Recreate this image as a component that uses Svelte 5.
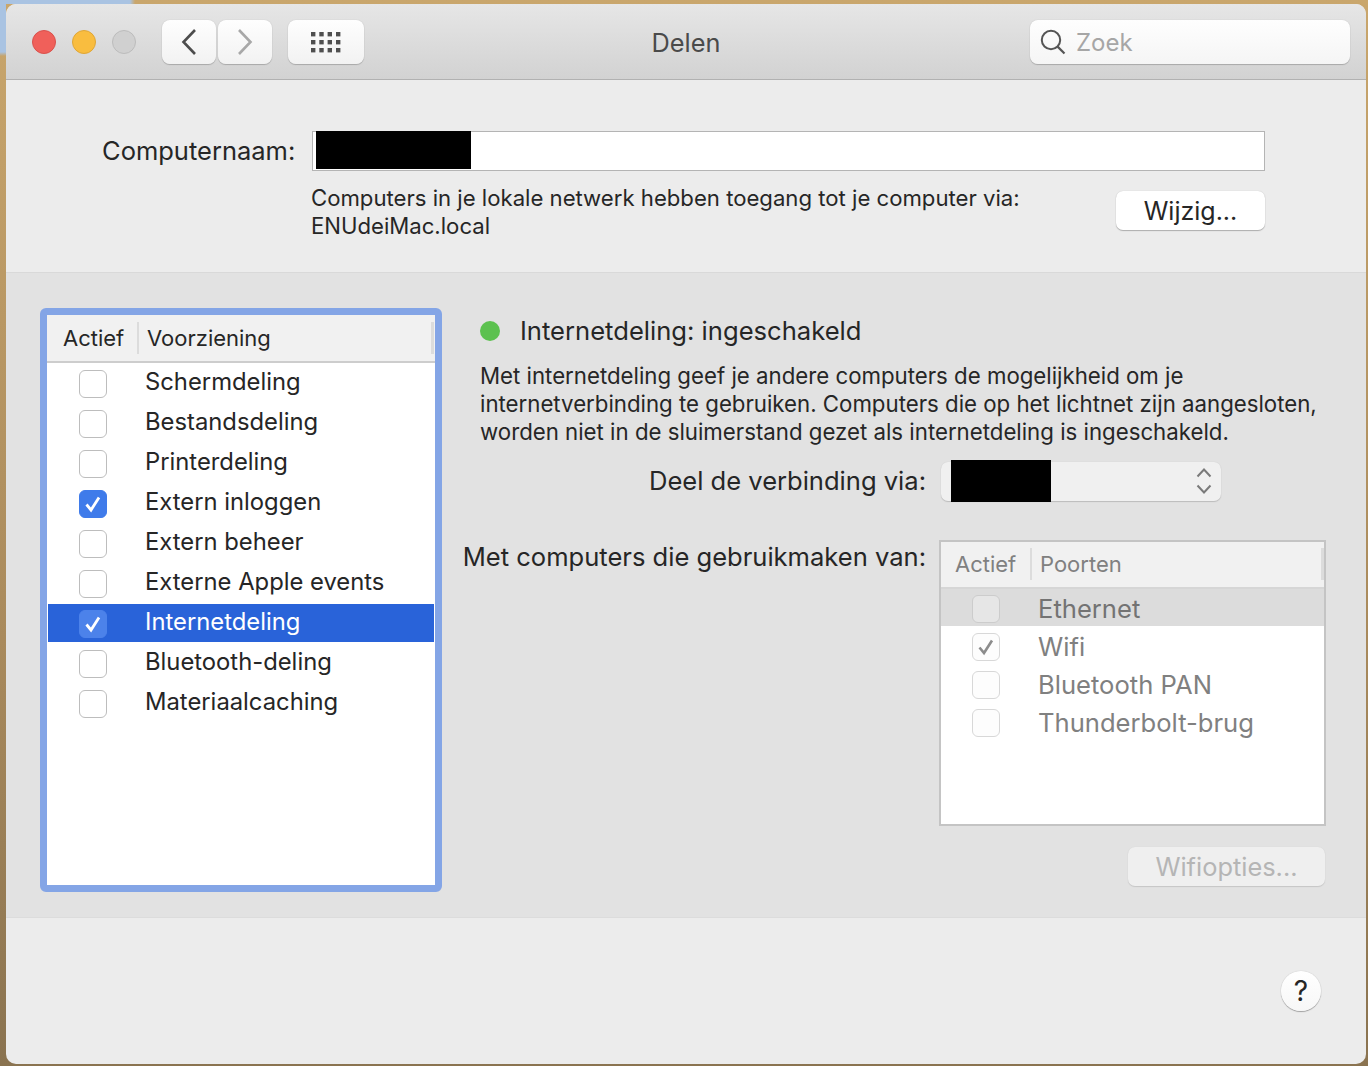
<script>
  const services = [
    { name: 'Schermdeling', on: false },
    { name: 'Bestandsdeling', on: false },
    { name: 'Printerdeling', on: false },
    { name: 'Extern inloggen', on: true },
    { name: 'Extern beheer', on: false },
    { name: 'Externe Apple events', on: false },
    { name: 'Internetdeling', on: true, sel: true },
    { name: 'Bluetooth-deling', on: false },
    { name: 'Materiaalcaching', on: false }
  ];
  const ports = [
    { name: 'Ethernet', on: false, sel: true },
    { name: 'Wifi', on: true },
    { name: 'Bluetooth PAN', on: false },
    { name: 'Thunderbolt-brug', on: false }
  ];
</script>

<div class="wall">
  <div class="window">
    <header class="titlebar">
      <div class="lights">
        <span class="light red"></span>
        <span class="light yellow"></span>
        <span class="light grey"></span>
      </div>
      <div class="nav">
        <button class="tb back" aria-label="Terug">
          <svg width="16" height="28" viewBox="0 0 16 28"><path d="M14 2 L2.5 14 L14 26" fill="none" stroke="#4d4d4d" stroke-width="2.6"/></svg>
        </button>
        <button class="tb fwd" aria-label="Vooruit">
          <svg width="16" height="28" viewBox="0 0 16 28"><path d="M2 2 L13.5 14 L2 26" fill="none" stroke="#a8a8a8" stroke-width="2.6"/></svg>
        </button>
      </div>
      <button class="tb grid-btn" aria-label="Toon alles">
        <svg width="30" height="22" viewBox="0 0 30 22" fill="#4f4f4f">
          {#each [0, 8, 16] as y}
            {#each [0, 8.3, 16.6, 25] as x}
              <rect x={x} y={y + 1} width="4.4" height="4.4" />
            {/each}
          {/each}
        </svg>
      </button>
      <div class="title">Delen</div>
      <div class="search">
        <svg width="28" height="28" viewBox="0 0 28 28"><circle cx="12" cy="12" r="9.2" fill="none" stroke="#555" stroke-width="2"/><path d="M18.6 18.6 L25.5 25.5" stroke="#555" stroke-width="2.2"/></svg>
        <span>Zoek</span>
      </div>
    </header>

    <section class="top">
      <div class="name-row">
        <span class="name-label">Computernaam:</span>
        <div class="name-field"><span class="redact r1"></span></div>
      </div>
      <div class="info-row">
        <p>Computers in je lokale netwerk hebben toegang tot je computer via:<br />ENUdeiMac.local</p>
        <button class="btn wijzig">Wijzig...</button>
      </div>
    </section>

    <section class="group">
      <div class="svc-list">
        <div class="thead">
          <span class="th-a">Actief</span>
          <span class="th-b">Voorziening</span>
        </div>
        <div class="rows">
          {#each services as s}
            <div class="row" class:sel={s.sel}>
              <span class="check" class:on={s.on}>
                {#if s.on}
                  <svg width="18" height="18" viewBox="0 0 18 18"><path d="M2.5 9.5 L7 15 L15 2.5" fill="none" stroke="#fff" stroke-width="2.8"/></svg>
                {/if}
              </span>
              <span class="row-name">{s.name}</span>
            </div>
          {/each}
        </div>
      </div>

      <div class="detail">
        <div class="status"><span class="dot"></span><span>Internetdeling: ingeschakeld</span></div>
        <p class="desc">Met internetdeling geef je andere computers de mogelijkheid om je<br />internetverbinding te gebruiken. Computers die op het lichtnet zijn aangesloten,<br />worden niet in de sluimerstand gezet als internetdeling is ingeschakeld.</p>
        <div class="via">
          <span class="lbl">Deel de verbinding via:</span>
          <div class="select">
            <span class="redact r2"></span>
            <svg width="18" height="30" viewBox="0 0 18 30"><path d="M2.5 10.5 L9 3.5 L15.5 10.5 M2.5 19.5 L9 26.5 L15.5 19.5" fill="none" stroke="#7a7a7a" stroke-width="2"/></svg>
          </div>
        </div>
        <div class="with">
          <span class="lbl">Met computers die gebruikmaken van:</span>
          <div class="ports">
            <div class="pthead">
              <span class="pth-a">Actief</span>
              <span class="pth-b">Poorten</span>
            </div>
            {#each ports as p}
              <div class="prow" class:psel={p.sel}>
                <span class="pcheck">
                  {#if p.on}
                    <svg width="18" height="18" viewBox="0 0 18 18"><path d="M2.5 9.5 L7 15 L15 2.5" fill="none" stroke="#8c8c8c" stroke-width="2.6"/></svg>
                  {/if}
                </span>
                <span class="prow-name">{p.name}</span>
              </div>
            {/each}
          </div>
        </div>
        <button class="btn wifi" disabled>Wifiopties...</button>
      </div>
    </section>

    <footer class="foot">
      <button class="help">?</button>
    </footer>
  </div>
</div>

<style>
  :global(body) {
    margin: 0;
  }
  .wall {
    width: 1368px;
    height: 1066px;
    box-sizing: border-box;
    padding: 4px 2px 2px 6px;
    background:
      linear-gradient(to right, #a9c3e2 0, #a9c3e2 130px, transparent 135px) top left / 100% 4px no-repeat,
      linear-gradient(to bottom, #a9c3e2 0, #a9c3e2 52px, transparent 56px) top left / 6px 100% no-repeat,
      linear-gradient(to bottom, #c9a66c, #a98a5c 60%, #8a7350);
    font-family: Inter, "Noto Sans", sans-serif;
    color: #262626;
    overflow: hidden;
  }
  .window {
    width: 1360px;
    height: 1060px;
    border-radius: 10px;
    overflow: hidden;
    background: #ececec;
    display: flex;
    flex-direction: column;
  }
  .titlebar {
    height: 76px;
    flex: none;
    box-sizing: border-box;
    border-bottom: 1px solid #b1b1b1;
    background: linear-gradient(#e6e6e6, #d2d2d2);
    display: flex;
    align-items: center;
    position: relative;
    padding-left: 26px;
    padding-top: 1px;
  }
  .lights {
    display: flex;
    gap: 16px;
    margin-right: 26px;
  }
  .light {
    width: 24px;
    height: 24px;
    border-radius: 50%;
    box-sizing: border-box;
    border: 1px solid;
  }
  .red { background: #f0605a; border-color: #d9514c; }
  .yellow { background: #f9bd3f; border-color: #dfa637; }
  .grey { background: #d0d0d0; border-color: #bcbcbc; }
  .nav {
    display: flex;
    gap: 2px;
    margin-right: 16px;
  }
  button {
    font-family: inherit;
    padding: 0;
    margin: 0;
    cursor: default;
  }
  .tb {
    height: 44px;
    border: none;
    border-radius: 8px;
    background: linear-gradient(#fefefe, #f2f2f2);
    box-shadow: 0 1px 1px #a8a8a8, 0 0 1px #b5b5b5;
    display: flex;
    align-items: center;
    justify-content: center;
  }
  .back, .fwd { width: 54px; }
  .grid-btn { width: 76px; }
  .title {
    position: absolute;
    left: 0;
    right: 0;
    top: 23px;
    text-align: center;
    font-size: 25.3px;
    line-height: 32px;
    color: #4a4a4a;
    pointer-events: none;
  }
  .search {
    margin-left: auto;
    margin-right: 16px;
    width: 320px;
    height: 44px;
    border-radius: 8px;
    background: linear-gradient(#fefefe, #f5f5f5);
    box-shadow: 0 1px 1px #a8a8a8, 0 0 1px #b5b5b5;
    display: flex;
    align-items: center;
    padding-left: 9px;
    box-sizing: border-box;
    gap: 9px;
    font-size: 24px;
    color: #a6a6a6;
  }
  .top {
    height: 192px;
    flex: none;
    box-sizing: border-box;
    padding: 51px 101px 0 96px;
  }
  .name-row {
    display: flex;
    align-items: center;
    gap: 17px;
  }
  .name-label {
    font-size: 25.5px;
    line-height: 40px;
  }
  .name-field {
    flex: 1;
    height: 40px;
    box-sizing: border-box;
    border: 1px solid #b4b4b4;
    background: #fff;
    padding-left: 3px;
  }
  .redact {
    display: block;
    background: #000;
  }
  .r1 { width: 155px; height: 38px; margin-top: -1px; }
  .info-row {
    display: flex;
    justify-content: space-between;
    margin-left: 209px;
    margin-top: 13px;
  }
  .info-row p {
    margin: 0;
    font-size: 22.15px;
    line-height: 28px;
    color: #262626;
  }
  .btn {
    height: 39px;
    border: none;
    border-radius: 7px;
    background: #fff;
    font-size: 25px;
    color: #262626;
    box-shadow: 0 1px 1px #adadad, 0 0 1px #bdbdbd;
  }
  .wijzig {
    width: 149px;
    margin-top: 7px;
  }
  .group {
    height: 646px;
    flex: none;
    box-sizing: border-box;
    background: #e2e2e2;
    border-top: 1px solid #d9d9d9;
    border-bottom: 1px solid #dcdcdc;
    padding: 35px 40px 0 34px;
    display: flex;
  }
  .svc-list {
    width: 402px;
    height: 584px;
    box-sizing: border-box;
    border: 7px solid #84a5e6;
    border-radius: 6px;
    background: #fff;
    flex: none;
  }
  .thead {
    height: 48px;
    box-sizing: border-box;
    background: #f1f1f1;
    border-bottom: 2px solid #cdcdcd;
    display: flex;
    align-items: center;
    font-size: 22px;
    padding-left: 16px;
  }
  .th-a {
    width: 74px;
    flex: none;
  }
  .th-b {
    flex: 1;
    padding-left: 8px;
    border-left: 2px solid #dcdcdc;
    line-height: 32px;
    margin-right: 1px;
    border-right: 3px solid #dcdcdc;
  }
  .rows {
    padding-top: 1px;
    display: flex;
    flex-direction: column;
    gap: 2px;
  }
  .row {
    height: 38px;
    display: flex;
    align-items: center;
    padding-left: 32px;
    font-size: 23.8px;
    color: #262626;
  }
  .row.sel {
    background: #2963d9;
    color: #fff;
    margin: 0 1px;
    padding-left: 31px;
  }
  .check {
    width: 28px;
    height: 28px;
    box-sizing: border-box;
    border: 1px solid #bdbdbd;
    border-radius: 6px;
    background: #fff;
    margin-top: 2px;
    display: flex;
    align-items: center;
    justify-content: center;
    flex: none;
  }
  .check.on {
    background: #3f7bea;
    border-color: #3f7bea;
  }
  .sel .check.on {
    background: #4c82ea;
    border-color: #4c82ea;
  }
  .row-name {
    margin-left: 38px;
    margin-bottom: 4px;
  }
  .detail {
    flex: 1;
    min-width: 0;
    position: relative;
  }
  .status {
    display: flex;
    align-items: center;
    margin-left: 38px;
    margin-top: 7px;
    font-size: 25.6px;
    line-height: 32px;
    gap: 20px;
  }
  .dot {
    width: 20px;
    height: 20px;
    border-radius: 50%;
    background: #5cc14f;
    flex: none;
  }
  .desc {
    margin: 15px 0 0 38px;
    font-size: 22.24px;
    line-height: 28px;
    white-space: nowrap;
  }
  .via {
    display: flex;
    align-items: center;
    margin-top: 14px;
    height: 42px;
  }
  .lbl {
    width: 484px;
    flex: none;
    text-align: right;
    font-size: 25.55px;
    line-height: 32px;
  }
  .select {
    margin-left: 15px;
    width: 280px;
    height: 39px;
    border-radius: 7px;
    background: #f0f0f0;
    box-shadow: 0 1px 1px #bcbcbc, 0 0 1px #c8c8c8;
    display: flex;
    align-items: center;
    justify-content: space-between;
    padding: 0 8px 0 10px;
    box-sizing: border-box;
  }
  .r2 {
    width: 100px;
    height: 42px;
  }
  .with {
    display: flex;
    align-items: flex-start;
    margin-top: 38px;
  }
  .with .lbl {
    padding-top: 1px;
  }
  .ports {
    margin-left: 13px;
    width: 387px;
    height: 286px;
    box-sizing: border-box;
    border: 2px solid #c4c4c4;
    background: #fff;
    color: #808080;
    flex: none;
  }
  .pthead {
    height: 47px;
    box-sizing: border-box;
    background: #f1f1f1;
    border-bottom: 2px solid #d6d6d6;
    display: flex;
    align-items: center;
    font-size: 22px;
    padding-left: 14px;
    padding-bottom: 1px;
  }
  .pth-a {
    width: 75px;
    flex: none;
  }
  .pth-b {
    flex: 1;
    padding-left: 8px;
    border-left: 2px solid #dcdcdc;
    border-right: 3px solid #dcdcdc;
    line-height: 32px;
  }
  .prow {
    height: 38px;
    display: flex;
    align-items: center;
    padding-left: 31px;
    font-size: 25.6px;
  }
  .prow-name {
    margin-bottom: 2px;
  }
  .psel {
    background: #dcdcdc;
    height: 37px;
    box-sizing: border-box;
    padding-top: 3px;
    margin-bottom: 2px;
    color: #737373;
  }
  .pcheck {
    width: 28px;
    height: 28px;
    box-sizing: border-box;
    border: 1px solid #d8d8d8;
    border-radius: 6px;
    background: #fdfdfd;
    margin-right: 38px;
    display: flex;
    align-items: center;
    justify-content: center;
    flex: none;
  }
  .psel .pcheck {
    background: #e6e6e6;
    border-color: #cccccc;
  }
  .wifi {
    display: block;
    margin: 21px 1px 0 auto;
    width: 197px;
    background: #efefef;
    color: #b5b5b5;
    font-size: 25.4px;
    box-shadow: 0 1px 1px #c6c6c6, 0 0 1px #d0d0d0;
  }
  .foot {
    flex: 1;
    display: flex;
    justify-content: flex-end;
    align-items: flex-start;
    padding: 53px 45px 0 0;
  }
  .help {
    width: 40px;
    height: 40px;
    border-radius: 50%;
    border: none;
    background: linear-gradient(#fff, #f7f7f7);
    box-shadow: 0 1px 1px #a0a0a0, 0 0 1px #a8a8a8;
    font-size: 28px;
    font-weight: 400;
    color: #262626;
    line-height: 40px;
  }
</style>
